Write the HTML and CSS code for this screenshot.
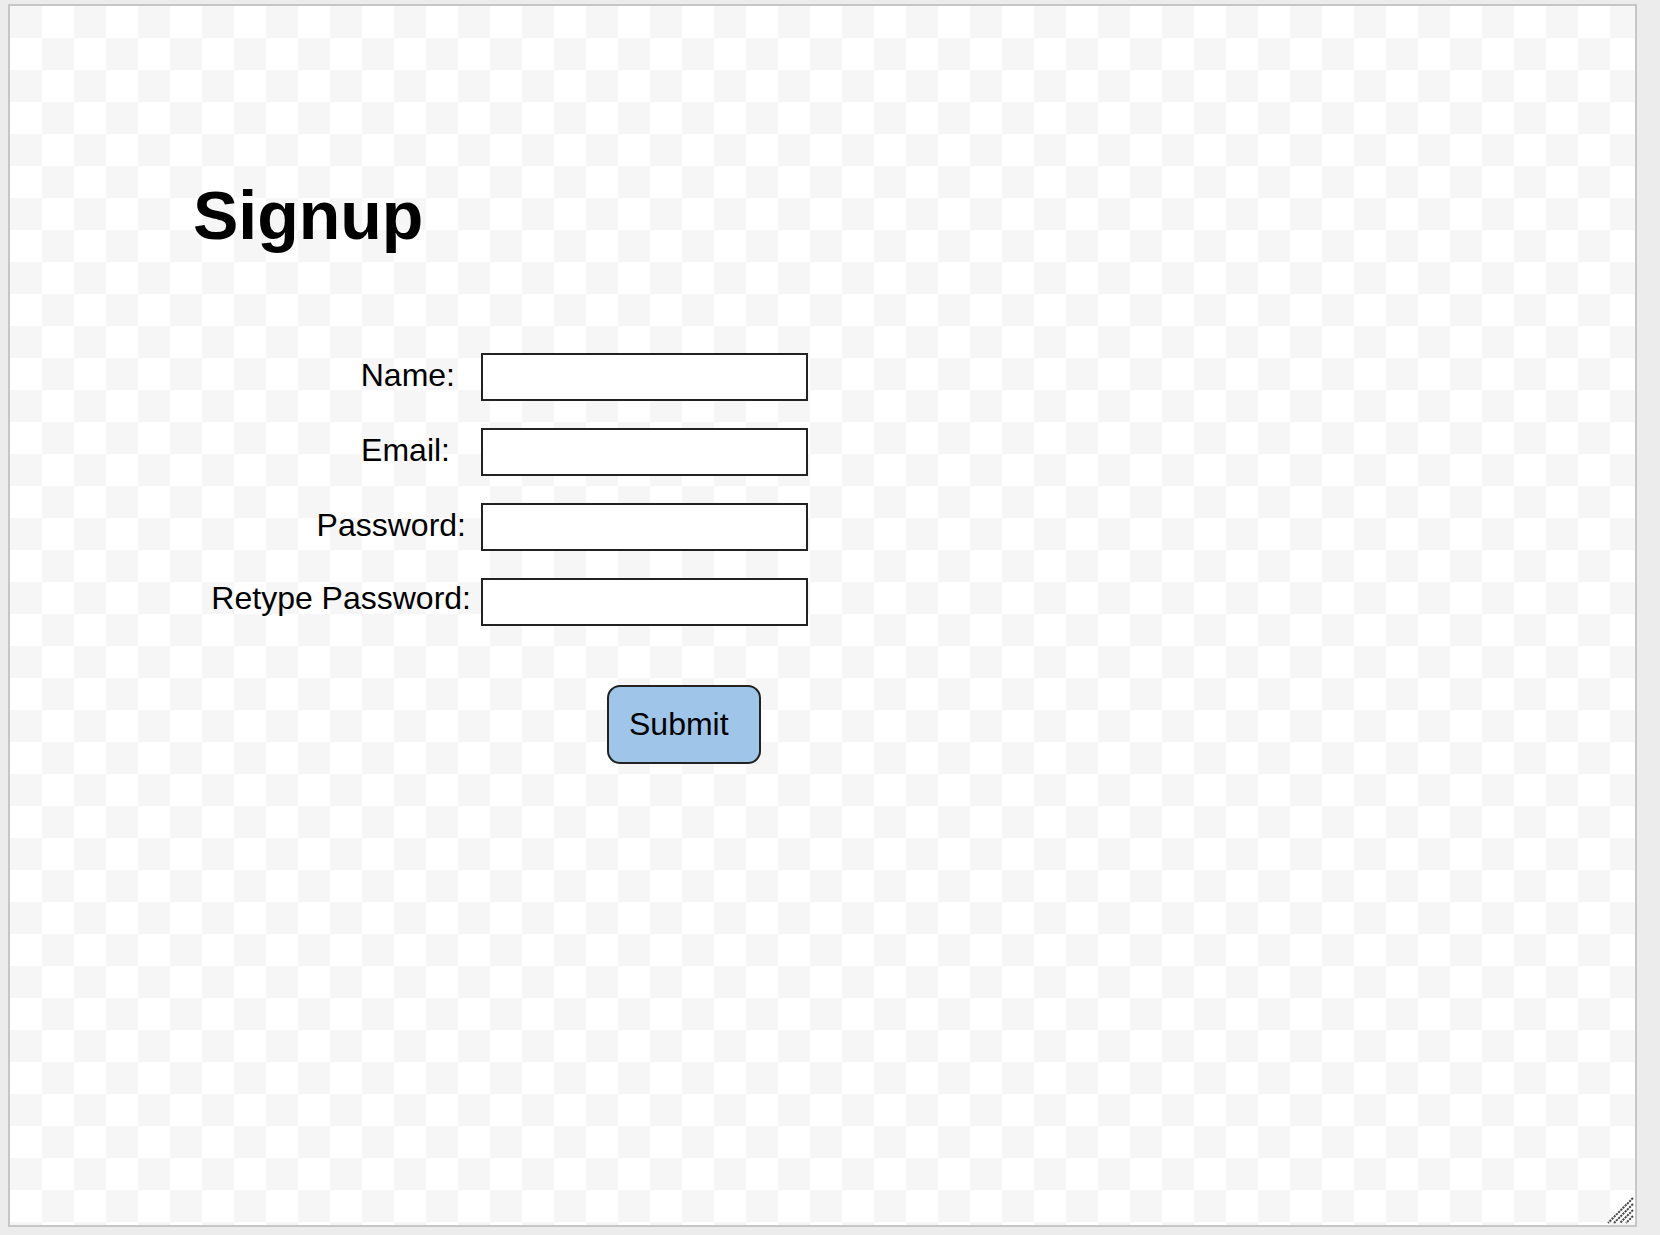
FILE: index.html
```html
<!DOCTYPE html>
<html lang="en">
<head>
<meta charset="utf-8">
<title>Signup</title>
<link rel="stylesheet" href="styles.css">
</head>
<body>
<div class="frame">
  <h1 class="title">Signup</h1>
  <form class="form">
    <div class="grid">
      <label class="label label-name" for="name">Name:</label>
      <input class="field" id="name" type="text">
      <label class="label label-email" for="email">Email:</label>
      <input class="field" id="email" type="text">
      <label class="label label-pass" for="pass">Password:</label>
      <input class="field" id="pass" type="password">
      <label class="label label-retype" for="retype">Retype Password:</label>
      <input class="field" id="retype" type="password">
    </div>
    <div class="actions">
      <button class="submit" type="button">Submit</button>
    </div>
  </form>
  <svg class="grip" width="30" height="30" viewBox="0 0 30 30">
    <g stroke="#4a4a4a" stroke-width="2" stroke-dasharray="2.2 0.9">
      <line x1="28" y1="3" x2="3" y2="28"/>
      <line x1="28" y1="9" x2="9" y2="28"/>
      <line x1="28" y1="15" x2="15" y2="28"/>
      <line x1="28" y1="21" x2="21" y2="28"/>
    </g>
  </svg>
</div>
</body>
</html>
```

FILE: styles.css
```css
html {
  background: #ececec;
}
body {
  margin: 4px 0 0 8px;
  font-family: "Liberation Sans", Arial, sans-serif;
  color: #000;
}
.frame {
  position: relative;
  box-sizing: border-box;
  width: 1629px;
  height: 1223px;
  border: 2px solid #c6c6c6;
  background-color: #fff;
  background-image: conic-gradient(#fff 25%, #f6f6f6 0 50%, #fff 0 75%, #f6f6f6 0);
  background-size: 64px 64px;
  padding: 169px 0 0 183px;
}
.title {
  margin: 0;
  font-size: 68px;
  line-height: 80px;
  font-weight: bold;
}
.form {
  margin: 98px 0 0 8px;
}
.grid {
  display: grid;
  grid-template-columns: 270px 327px;
  column-gap: 10px;
  row-gap: 27px;
  align-items: start;
}
.label {
  font-size: 32px;
  line-height: 45px;
  text-align: right;
}
.label-name { margin-right: 16px; }
.label-email { margin-right: 21px; }
.label-pass { margin-right: 5px; }
.label-retype { margin-right: 0; line-height: 40px; }
.field {
  box-sizing: border-box;
  width: 327px;
  height: 48px;
  margin: 0;
  border: 2px solid #222;
  border-radius: 0;
  background: #fff;
  font-size: 24px;
  padding: 0 6px;
  outline: none;
}
.actions {
  margin: 59px 0 0 406px;
}
.submit {
  box-sizing: border-box;
  width: 154px;
  height: 79px;
  border: 2px solid #222;
  border-radius: 13px;
  background: #9fc5e8;
  font-family: "Liberation Sans", Arial, sans-serif;
  font-size: 32px;
  color: #000;
  text-align: left;
  padding: 0 0 0 20px;
  cursor: pointer;
}
.grip {
  position: absolute;
  right: 0;
  bottom: 0;
  display: block;
}
```
